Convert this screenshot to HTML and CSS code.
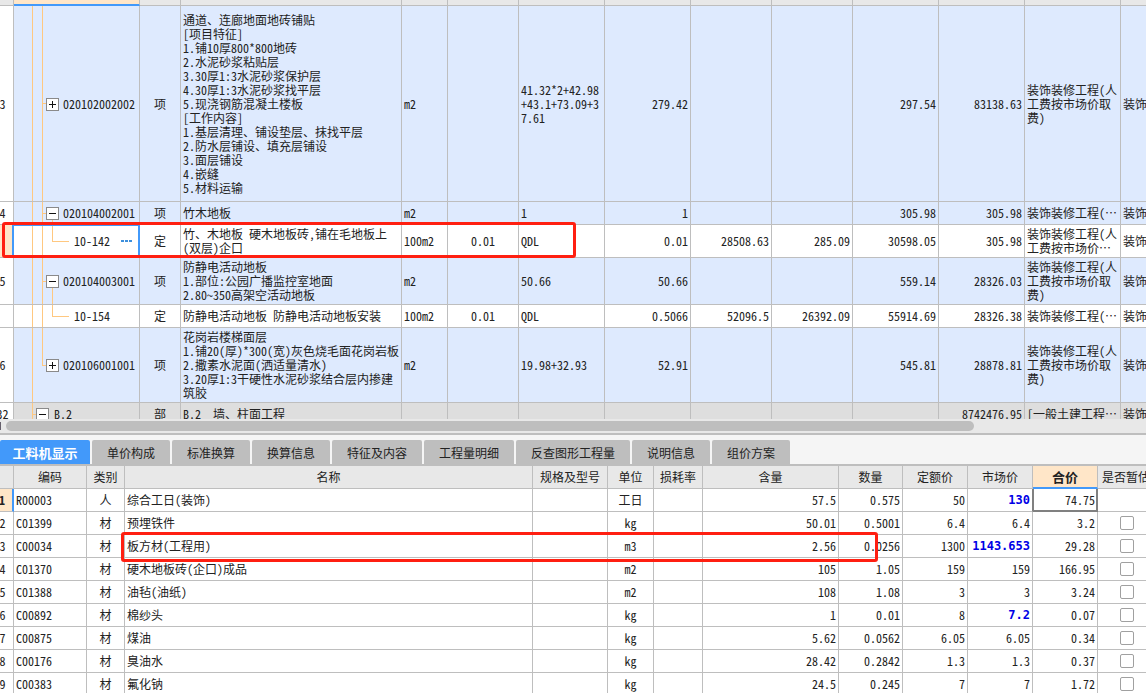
FILE: index.html
```html
<!DOCTYPE html>
<html lang="zh-CN">
<head>
<meta charset="utf-8">
<title>工料机显示</title>
<link rel="stylesheet" href="styles.css">
</head>
<body>
<main class="app">
  <section class="pane bill-pane" aria-label="清单">
    <table class="sheet bill">
      <colgroup>
        <col class="w22"><col class="w126"><col class="w41"><col class="w221"><col class="w46"><col class="w71"><col class="w86"><col class="w86"><col class="w81"><col class="w81"><col class="w86"><col class="w86"><col class="w96"><col class="w96">
      </colgroup>
      <thead>
        <tr><th></th><th class="current"></th><th></th><th></th><th></th><th></th><th></th><th></th><th></th><th></th><th></th><th></th><th></th><th></th></tr>
      </thead>
      <tbody>
        <tr class="item">
          <td class="index">3</td>
          <td class="tree branch"><div class="node"><button class="toggle" aria-label="展开"><svg viewBox="0 0 11 11"><path d="M2 5.500h7M5.500 2v7"/></svg></button><span>020102002002</span></div></td>
          <td class="mid">项</td>
          <td>通道、连廊地面地砖铺贴<br>[项目特征]<br>1.铺10厚800*800地砖<br>2.水泥砂浆粘贴层<br>3.30厚1:3水泥砂浆保护层<br>4.30厚1:3水泥砂浆找平层<br>5.现浇钢筋混凝土楼板<br>[工作内容]<br>1.基层清理、铺设垫层、抹找平层<br>2.防水层铺设、填充层铺设<br>3.面层铺设<br>4.嵌缝<br>5.材料运输</td>
          <td>m2</td><td></td><td>41.32*2+42.98+43.1+73.09+37.61</td><td class="num">279.42</td><td></td><td></td><td class="num">297.54</td><td class="num">83138.63</td><td>装饰装修工程(人工费按市场价取费)</td><td class="line">装饰装修工程</td>
        </tr>
        <tr class="item">
          <td class="index">4</td>
          <td class="tree branch open"><div class="node"><button class="toggle" aria-label="折叠"><svg viewBox="0 0 11 11"><path d="M2 5.500h7"/></svg></button><span>020104002001</span></div></td>
          <td class="mid">项</td><td>竹木地板</td>
          <td>m2</td><td></td><td>1</td><td class="num">1</td><td></td><td></td><td class="num">305.98</td><td class="num">305.98</td><td class="line">装饰装修工程(…</td><td class="line">装饰装修工程</td>
        </tr>
        <tr class="quota two-line">
          <td class="index active"></td>
          <td class="tree leaf selected"><div class="node child"><span>10-142</span><button class="more" aria-label="更多"><svg viewBox="0 0 11 3"><path d="M0 0h3v2H0zM4 0h3v2H4zM8 0h3v2H8z"/></svg></button></div></td>
          <td class="mid">定</td><td>竹、木地板 硬木地板砖,铺在毛地板上<br>(双层)企口</td>
          <td>100m2</td><td class="mid">0.01</td><td>QDL</td><td class="num">0.01</td><td class="num">28508.63</td><td class="num">285.09</td><td class="num">30598.05</td><td class="num">305.98</td><td>装饰装修工程(人工费按市场价…</td><td class="line">装饰装修工程</td>
        </tr>
        <tr class="item">
          <td class="index">5</td>
          <td class="tree branch open"><div class="node"><button class="toggle" aria-label="折叠"><svg viewBox="0 0 11 11"><path d="M2 5.500h7"/></svg></button><span>020104003001</span></div></td>
          <td class="mid">项</td><td>防静电活动地板<br>1.部位:公园广播监控室地面<br>2.80~350高架空活动地板</td>
          <td>m2</td><td></td><td>50.66</td><td class="num">50.66</td><td></td><td></td><td class="num">559.14</td><td class="num">28326.03</td><td>装饰装修工程(人工费按市场价取费)</td><td class="line">装饰装修工程</td>
        </tr>
        <tr class="quota">
          <td class="index"></td>
          <td class="tree leaf"><div class="node child"><span>10-154</span></div></td>
          <td class="mid">定</td><td>防静电活动地板 防静电活动地板安装</td>
          <td>100m2</td><td class="mid">0.01</td><td>QDL</td><td class="num">0.5066</td><td class="num">52096.5</td><td class="num">26392.09</td><td class="num">55914.69</td><td class="num">28326.38</td><td class="line">装饰装修工程(…</td><td class="line">装饰装修工程</td>
        </tr>
        <tr class="item">
          <td class="index">6</td>
          <td class="tree last"><div class="node"><button class="toggle" aria-label="展开"><svg viewBox="0 0 11 11"><path d="M2 5.500h7M5.500 2v7"/></svg></button><span>020106001001</span></div></td>
          <td class="mid">项</td><td>花岗岩楼梯面层<br>1.铺20(厚)*300(宽)灰色烧毛面花岗岩板<br>2.撒素水泥面(洒适量清水)<br>3.20厚1:3干硬性水泥砂浆结合层内掺建筑胶</td>
          <td>m2</td><td></td><td>19.98+32.93</td><td class="num">52.91</td><td></td><td></td><td class="num">545.81</td><td class="num">28878.81</td><td>装饰装修工程(人工费按市场价取费)</td><td class="line">装饰装修工程</td>
        </tr>
        <tr class="division">
          <td class="index">32</td>
          <td class="tree root"><div class="node top"><button class="toggle" aria-label="折叠"><svg viewBox="0 0 11 11"><path d="M2 5.500h7"/></svg></button><span>B.2</span></div></td>
          <td class="mid">部</td><td>B.2&nbsp;&nbsp;墙、柱面工程</td>
          <td></td><td></td><td></td><td></td><td></td><td></td><td></td><td class="num">8742476.95</td><td class="line">[一般土建工程…</td><td class="line">装饰装修工程</td>
        </tr>
      </tbody>
    </table>
    <div class="marker marker-bill"></div>
  </section>

  <div class="scrollbar"><div class="thumb"></div></div>

  <nav class="tabs" role="tablist">
    <button class="tab active" role="tab" aria-selected="true">工料机显示</button>
    <button class="tab" role="tab">单价构成</button>
    <button class="tab" role="tab">标准换算</button>
    <button class="tab" role="tab">换算信息</button>
    <button class="tab" role="tab">特征及内容</button>
    <button class="tab" role="tab">工程量明细</button>
    <button class="tab" role="tab">反查图形工程量</button>
    <button class="tab" role="tab">说明信息</button>
    <button class="tab" role="tab">组价方案</button>
  </nav>

  <section class="pane detail-pane" aria-label="工料机显示">
    <table class="sheet detail">
      <colgroup>
        <col class="w22"><col class="w73"><col class="w38"><col class="w408"><col class="w75"><col class="w46"><col class="w49"><col class="w136"><col class="w64"><col class="w65"><col class="w65"><col class="w65"><col class="w57">
      </colgroup>
      <thead>
        <tr><th></th><th>编码</th><th>类别</th><th>名称</th><th>规格及型号</th><th>单位</th><th>损耗率</th><th>含量</th><th>数量</th><th>定额价</th><th>市场价</th><th class="current">合价</th><th>是否暂估</th></tr>
      </thead>
      <tbody>
        <tr><td class="index active">1</td><td>R00003</td><td class="mid">人</td><td>综合工日(装饰)</td><td></td><td class="mid">工日</td><td></td><td class="num">57.5</td><td class="num">0.575</td><td class="num">50</td><td class="num changed before-focus">130</td><td class="num focus">74.75</td><td></td></tr>
        <tr><td class="index">2</td><td>C01399</td><td class="mid">材</td><td>预埋铁件</td><td></td><td class="mid">kg</td><td></td><td class="num">50.01</td><td class="num">0.5001</td><td class="num">6.4</td><td class="num">6.4</td><td class="num">3.2</td><td><input type="checkbox" aria-label="是否暂估 C01399"></td></tr>
        <tr><td class="index">3</td><td>C00034</td><td class="mid">材</td><td>板方材(工程用)</td><td></td><td class="mid">m3</td><td></td><td class="num">2.56</td><td class="num">0.0256</td><td class="num">1300</td><td class="num changed">1143.653</td><td class="num">29.28</td><td><input type="checkbox" aria-label="是否暂估 C00034"></td></tr>
        <tr><td class="index">4</td><td>C01370</td><td class="mid">材</td><td>硬木地板砖(企口)成品</td><td></td><td class="mid">m2</td><td></td><td class="num">105</td><td class="num">1.05</td><td class="num">159</td><td class="num">159</td><td class="num">166.95</td><td><input type="checkbox" aria-label="是否暂估 C01370"></td></tr>
        <tr><td class="index">5</td><td>C01388</td><td class="mid">材</td><td>油毡(油纸)</td><td></td><td class="mid">m2</td><td></td><td class="num">108</td><td class="num">1.08</td><td class="num">3</td><td class="num">3</td><td class="num">3.24</td><td><input type="checkbox" aria-label="是否暂估 C01388"></td></tr>
        <tr><td class="index">6</td><td>C00892</td><td class="mid">材</td><td>棉纱头</td><td></td><td class="mid">kg</td><td></td><td class="num">1</td><td class="num">0.01</td><td class="num">8</td><td class="num changed">7.2</td><td class="num">0.07</td><td><input type="checkbox" aria-label="是否暂估 C00892"></td></tr>
        <tr><td class="index">7</td><td>C00875</td><td class="mid">材</td><td>煤油</td><td></td><td class="mid">kg</td><td></td><td class="num">5.62</td><td class="num">0.0562</td><td class="num">6.05</td><td class="num">6.05</td><td class="num">0.34</td><td><input type="checkbox" aria-label="是否暂估 C00875"></td></tr>
        <tr><td class="index">8</td><td>C00176</td><td class="mid">材</td><td>臭油水</td><td></td><td class="mid">kg</td><td></td><td class="num">28.42</td><td class="num">0.2842</td><td class="num">1.3</td><td class="num">1.3</td><td class="num">0.37</td><td><input type="checkbox" aria-label="是否暂估 C00176"></td></tr>
        <tr><td class="index">9</td><td>C00383</td><td class="mid">材</td><td>氟化钠</td><td></td><td class="mid">kg</td><td></td><td class="num">24.5</td><td class="num">0.245</td><td class="num">7</td><td class="num">7</td><td class="num">1.72</td><td><input type="checkbox" aria-label="是否暂估 C00383"></td></tr>
      </tbody>
    </table>
    <div class="marker marker-detail"></div>
  </section>
</main>
</body>
</html>
```

FILE: styles.css
```css
:root {
  --line: #bebebe;
  --head: #e8e8e8;
  --item: #deeafe;
  --peach: #ffe6c8;
  --blue: #4299fa;
  --guide: #ffc880;
  --red: #ff1f11;
}

* { box-sizing: border-box; }

body {
  margin: 0;
  background: #fff;
  color: #222;
  font-family: "Noto Sans CJK SC", sans-serif;
  font-size: 12px;
  line-height: 14px;
  /* half-width Latin keeps digits at half the width of a Chinese character */
  font-feature-settings: "hwid";
}

button {
  margin: 0;
  padding: 0;
  border: 0;
  background: none;
  color: inherit;
  font: inherit;
  font-feature-settings: inherit;
}

.app {
  display: flex;
  flex-direction: column;
  height: 100vh;
  overflow: hidden;
}

.pane { position: relative; overflow: hidden; }
.bill-pane { flex: 0 1 419px; }
.detail-pane { flex: 1; border-top: 2px solid var(--line); }

/* Sheets */
.sheet {
  width: 0;
  margin-left: -8px;
  table-layout: fixed;
  border-collapse: separate;
  border-spacing: 0;
}
.sheet th,
.sheet td {
  padding: 0 0 0 2px;
  border-right: 1px solid var(--line);
  border-bottom: 1px solid var(--line);
  vertical-align: middle;
  text-align: left;
  word-break: break-all;
}
.sheet th {
  padding: 0;
  background: var(--head);
  font-weight: 400;
  text-align: center;
  white-space: nowrap;
}
.sheet th.current {
  border-bottom: 2px solid var(--blue);
  background: var(--peach);
  font-size: 13px;
  font-weight: 700;
}
.sheet tr { height: 23px; }
.sheet .mid { padding: 0; text-align: center; }
.sheet .num { padding: 0 2px 0 0; text-align: right; white-space: nowrap; }
.sheet .line { white-space: nowrap; overflow: hidden; }
.sheet .index { padding: 0; background: #fff; text-align: center; }
.sheet .index.active {
  border-right: 2px solid var(--blue);
  background: var(--peach);
  font-weight: 700;
}

.w22 { width: 22px; }
.w38 { width: 38px; }
.w41 { width: 41px; }
.w46 { width: 46px; }
.w49 { width: 49px; }
.w57 { width: 57px; }
.w64 { width: 64px; }
.w65 { width: 65px; }
.w71 { width: 71px; }
.w73 { width: 73px; }
.w75 { width: 75px; }
.w81 { width: 81px; }
.w86 { width: 86px; }
.w96 { width: 96px; }
.w126 { width: 126px; }
.w136 { width: 136px; }
.w221 { width: 221px; }
.w408 { width: 408px; }

/* Bill rows */
.bill thead tr { height: 6px; }
.bill th { line-height: 0; }
.bill .item td { padding-top: 2px; padding-bottom: 2px; }
.bill .item { background: var(--item); }
.bill .item:first-child td { padding-top: 7px; padding-bottom: 6px; }
.bill .item:nth-child(6) td { padding-top: 2px; padding-bottom: 2px; }
.bill .quota { background: #fff; }
.bill .two-line { height: 33px; }
.bill .division { background: #dedede; }
.bill .division .index,
.bill .item .index { background: #fff; }

/* Tree column: guide lines are drawn as backgrounds behind the toggles */
.sheet .tree { padding-left: 0; background-repeat: no-repeat; }
.tree.branch {
  background-image: linear-gradient(var(--guide), var(--guide)), linear-gradient(var(--guide), var(--guide)), linear-gradient(var(--guide), var(--guide));
  background-position: 18px 0, 28px 0, 28px 50%;
  background-size: 1px 100%, 1px 100%, 4px 1px;
}
.tree.open {
  background-image: linear-gradient(var(--guide), var(--guide)), linear-gradient(var(--guide), var(--guide)), linear-gradient(var(--guide), var(--guide)), linear-gradient(var(--guide), var(--guide));
  background-position: 18px 0, 28px 0, 28px 50%, 38px 100%;
  background-size: 1px 100%, 1px 100%, 4px 1px, 1px 50%;
}
.tree.leaf {
  background-image: linear-gradient(var(--guide), var(--guide)), linear-gradient(var(--guide), var(--guide)), linear-gradient(var(--guide), var(--guide)), linear-gradient(var(--guide), var(--guide));
  background-position: 18px 0, 28px 0, 38px 0, 38px 50%;
  background-size: 1px 100%, 1px 100%, 1px 50%, 17px 1px;
}
.tree.last {
  background-image: linear-gradient(var(--guide), var(--guide)), linear-gradient(var(--guide), var(--guide)), linear-gradient(var(--guide), var(--guide));
  background-position: 18px 0, 28px 0, 28px 50%;
  background-size: 1px 100%, 1px 50%, 4px 1px;
}
.tree.root {
  background-image: linear-gradient(var(--guide), var(--guide)), linear-gradient(var(--guide), var(--guide));
  background-position: 18px 0, 18px 50%;
  background-size: 1px 100%, 4px 1px;
}
.sheet .tree.selected {
  border-right: 2px solid var(--blue);
  box-shadow: inset 0 1px 0 var(--blue);
}
.node {
  display: flex;
  align-items: center;
  gap: 4px;
  padding-left: 32px;
  white-space: nowrap;
}
.node.child { padding: 0 6px 0 60px; justify-content: space-between; }
.node.top { padding-left: 22px; gap: 5px; }
.toggle {
  flex: none;
  width: 13px;
  height: 13px;
  border: 1px solid #8a8a8a;
  background: #fff;
}
.toggle svg { display: block; width: 11px; height: 11px; }
.toggle path { stroke: #111; stroke-width: 1; fill: none; }
.more svg { display: block; width: 11px; height: 3px; }
.more path { fill: #3d8fdc; }

/* Detail rows */
.detail .changed {
  color: #0000e6;
  font-family: "DejaVu Sans Mono", monospace;
  font-weight: 700;
}
.detail .before-focus { border-right-color: #808080; }
.detail .focus {
  border-color: #808080;
  box-shadow: inset 1px 0 0 #808080, inset -1px -1px 0 #808080;
}
.detail input {
  display: block;
  width: 14px;
  height: 14px;
  margin: 0 auto;
  appearance: none;
  border: 1px solid #a0a0a0;
  border-radius: 2px;
  background: #fff;
}

/* Annotation frames laid over the sheets */
.marker {
  position: absolute;
  border: 3px solid var(--red);
  border-radius: 3px;
  pointer-events: none;
}
.marker-bill { left: 2px; top: 222px; width: 574px; height: 36px; }
.marker-detail { left: 121px; top: 66px; width: 757px; height: 30px; }

/* Scrollbar */
.scrollbar {
  flex: none;
  height: 16px;
  padding: 2px 15% 4px 6px;
  border-bottom: 2px solid var(--line);
  background: linear-gradient(#66606c, #66606c) 0 3px / 1px 8px no-repeat var(--head);
}
.thumb { height: 10px; border-radius: 5px; background: var(--line); }

/* Tabs */
.tabs {
  display: flex;
  flex: none;
  gap: 2px;
  padding-top: 5px;
  background: #f5f5f5;
}
.tab {
  height: 24px;
  padding: 2px 15px 0;
  border-radius: 2px 2px 0 0;
  background: var(--line);
  white-space: nowrap;
}
.tab.active {
  min-width: 90px;
  padding: 2px 12px 0;
  background: var(--blue);
  color: #fff;
  font-size: 13px;
  font-weight: 700;
}
```
